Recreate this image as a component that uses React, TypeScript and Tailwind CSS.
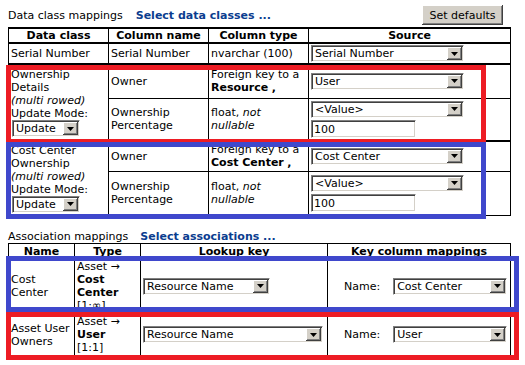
import React from "react";

const Arrow = () => (
  <svg width="7" height="4" viewBox="0 0 7 4">
    <path d="M0 0h7L3.5 4z" fill="#000" />
  </svg>
);

const Select = ({ label, w }: { label: string; w: string }) => (
  <div
    className={`flex h-[17px] bg-white border border-t-[#808080] border-l-[#808080] border-r-white border-b-white shadow-[inset_1px_1px_0_#404040,inset_-1px_-1px_0_#d4d0c8] ${w}`}
  >
    <span className="flex-1 pl-[3px] pt-[1px] leading-[13px] whitespace-nowrap overflow-hidden">
      {label}
    </span>
    <span className="w-[15px] my-[1px] mr-[1px] bg-[#d4d0c8] flex items-center justify-center shadow-[inset_-1px_-1px_0_#404040,inset_1px_1px_0_#ffffff,inset_-2px_-2px_0_#808080]">
      <Arrow />
    </span>
  </div>
);

const Input = ({ value }: { value: string }) => (
  <div className="w-[105px] h-[18px] mt-[2px] bg-white border border-t-[#808080] border-l-[#808080] border-r-white border-b-white shadow-[inset_1px_1px_0_#404040,inset_-1px_-1px_0_#d4d0c8] pl-[2px] pt-[2px] leading-[13px]">
    {value}
  </div>
);

const td = "border border-black px-[2px] align-middle text-left";
const th = "border border-black font-bold text-center leading-[13px]";

export default function App() {
  return (
    <div
      className="relative w-[525px] h-[365px] overflow-hidden bg-white text-black text-[11px] leading-[13px]"
      style={{ fontFamily: '"DejaVu Sans", Verdana, sans-serif' }}
    >
      {/* data class mappings */}
      <div className="h-[27px] pt-[3px] pl-[8px] pr-[22px] flex items-center">
        <span>Data class mappings</span>
        <span className="ml-[13px] font-bold text-[#0b3d8f]">Select data classes ...</span>
        <button className="ml-auto w-[81px] h-[20px] bg-[#d4d0c8] shadow-[inset_-1px_-1px_0_#404040,inset_1px_1px_0_#ffffff,inset_-2px_-2px_0_#808080] text-[11px]">
          Set defaults
        </button>
      </div>

      <table className="ml-[8px] w-[502px] table-fixed border-collapse">
        <colgroup>
          <col className="w-[100px]" />
          <col className="w-[100px]" />
          <col className="w-[100px]" />
          <col className="w-[202px]" />
        </colgroup>
        <tbody>
          <tr className="h-[15px] border-t-2 border-b-2 border-black">
            <th className={th}>Data class</th>
            <th className={th}>Column name</th>
            <th className={th}>Column type</th>
            <th className={th}>Source</th>
          </tr>
          <tr className="h-[21px]">
            <td className={td}>Serial Number</td>
            <td className={td}>Serial Number</td>
            <td className={td}>nvarchar (100)</td>
            <td className={td}>
              <Select label="Serial Number" w="w-[153px]" />
            </td>
          </tr>

          <tr className="h-[34px] border-t-2 border-black">
            <td className={td} rowSpan={2}>
              <div>Ownership</div>
              <div>Details</div>
              <div className="italic">(multi rowed)</div>
              <div>Update Mode:</div>
              <div className="pl-[1px]">
                <Select label="Update" w="w-[68px]" />
              </div>
            </td>
            <td className={td}>Owner</td>
            <td className={td}>
              <div>Foreign key to a</div>
              <div>
                <b>Resource</b> <b>,</b>
              </div>
            </td>
            <td className={td}>
              <Select label="User" w="w-[153px]" />
            </td>
          </tr>
          <tr className="h-[43px]">
            <td className={td}>
              <div>Ownership</div>
              <div>Percentage</div>
            </td>
            <td className={td}>
              <div>
                float, <i>not</i>
              </div>
              <div className="italic">nullable</div>
            </td>
            <td className={td}>
              <Select label="<Value>" w="w-[153px]" />
              <Input value="100" />
            </td>
          </tr>

          <tr className="h-[30px] border-t-2 border-black">
            <td className={td} rowSpan={2}>
              <div>Cost Center</div>
              <div>Ownership</div>
              <div className="italic">(multi rowed)</div>
              <div>Update Mode:</div>
              <div className="pl-[1px]">
                <Select label="Update" w="w-[68px]" />
              </div>
            </td>
            <td className={td}>Owner</td>
            <td className={td}>
              <div>Foreign key to a</div>
              <div>
                <b>Cost Center</b> <b>,</b>
              </div>
            </td>
            <td className={td}>
              <Select label="Cost Center" w="w-[153px]" />
            </td>
          </tr>
          <tr className="h-[44px]">
            <td className={td}>
              <div>Ownership</div>
              <div>Percentage</div>
            </td>
            <td className={td}>
              <div>
                float, <i>not</i>
              </div>
              <div className="italic">nullable</div>
            </td>
            <td className={td}>
              <Select label="<Value>" w="w-[153px]" />
              <Input value="100" />
            </td>
          </tr>
        </tbody>
      </table>

      {/* association mappings */}
      <div className="h-[27px] pl-[8px] flex items-end">
        <span>Association mappings</span>
        <span className="ml-[12px] font-bold text-[#0b3d8f]">Select associations ...</span>
      </div>

      <table className="ml-[8px] w-[502px] table-fixed border-collapse">
        <colgroup>
          <col className="w-[66px]" />
          <col className="w-[66px]" />
          <col className="w-[187px]" />
          <col className="w-[183px]" />
        </colgroup>
        <tbody>
          <tr className="h-[16px]">
            <th className={th}>Name</th>
            <th className={th}>Type</th>
            <th className={th}>Lookup key</th>
            <th className={th}>Key column mappings</th>
          </tr>
          <tr className="h-[54px]">
            <td className={td}>
              <div>Cost</div>
              <div>Center</div>
            </td>
            <td className={td}>
              <div>Asset →</div>
              <div className="font-bold">Cost</div>
              <div className="font-bold">Center</div>
              <div>[1:∞]</div>
            </td>
            <td className={td}>
              <Select label="Resource Name" w="w-[127px]" />
            </td>
            <td className={td}>
              <div className="flex items-center pl-[14px] gap-[13px]">
                <span>Name:</span>
                <Select label="Cost Center" w="w-[114px]" />
              </div>
            </td>
          </tr>
          <tr className="h-[43px]">
            <td className={td}>
              <div>Asset User</div>
              <div>Owners</div>
            </td>
            <td className={td}>
              <div>Asset →</div>
              <div className="font-bold">User</div>
              <div>[1:1]</div>
            </td>
            <td className={td}>
              <Select label="Resource Name" w="w-[180px]" />
            </td>
            <td className={td}>
              <div className="flex items-center pl-[14px] gap-[13px]">
                <span>Name:</span>
                <Select label="User" w="w-[114px]" />
              </div>
            </td>
          </tr>
        </tbody>
      </table>

      {/* highlight boxes drawn over the tables */}
      <div className="absolute left-[6px] top-[65px] w-[480px] h-[79px] border-[5px] border-[#ed1c24]" />
      <div className="absolute left-[6px] top-[142px] w-[480px] h-[77px] border-[5px] border-[#3f48cc]" />
      <div className="absolute left-[6px] top-[256px] w-[513px] h-[56px] border-[5px] border-[#3f48cc]" />
      <div className="absolute left-[6px] top-[312px] w-[513px] h-[48px] border-[5px] border-[#ed1c24]" />
    </div>
  );
}
